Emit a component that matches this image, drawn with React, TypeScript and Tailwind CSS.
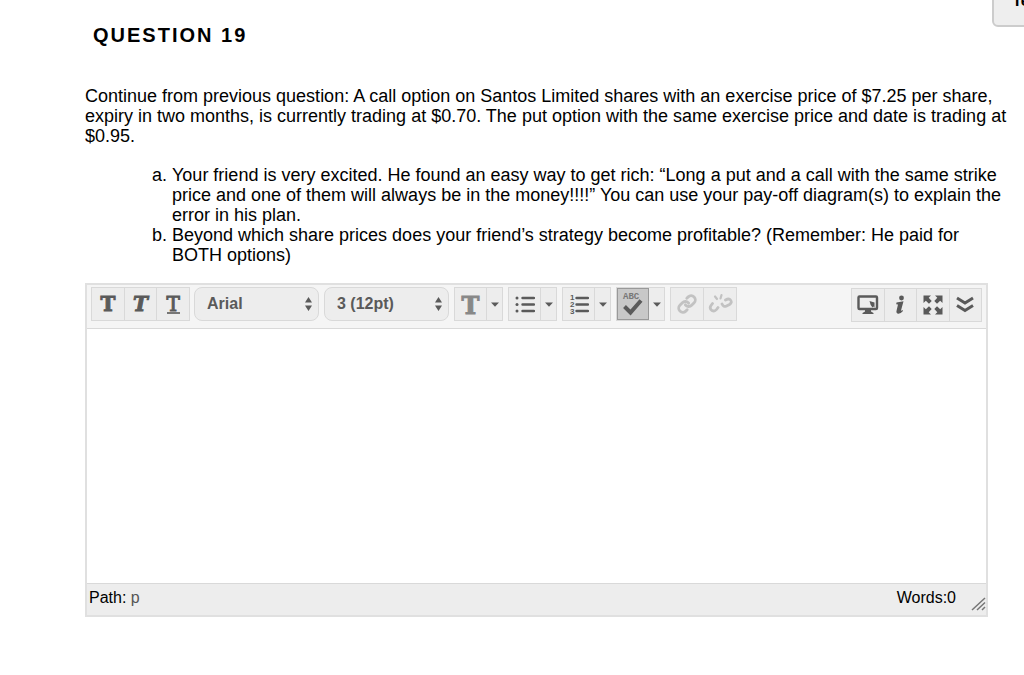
import { ReactNode } from "react";

const dark = "#5a5a5a";

function ToolButton({ label, children, className = "flex-1", disabled = false }: { label: string; children: ReactNode; className?: string; disabled?: boolean }) {
  return (
    <button type="button" aria-label={label} disabled={disabled} className={`flex items-center justify-center ${className}`}>
      {children}
    </button>
  );
}

function Group({ children, className = "" }: { children: ReactNode; className?: string }) {
  return (
    <div className={`flex h-[34px] shrink-0 divide-x divide-[#d9d9d9] border border-[#d9d9d9] bg-[#ededed] ${className}`}>{children}</div>
  );
}

function MenuArrow({ label }: { label: string }) {
  return (
    <ToolButton label={label} className="w-[15px]">
      <svg width="8" height="5" viewBox="0 0 8 5" fill={dark}>
        <path d="M0 0.500h8L4 4.8z" />
      </svg>
    </ToolButton>
  );
}

function SelectBox({ label, value }: { label: string; value: string }) {
  return (
    <div className="relative h-[34px] w-[125px] shrink-0">
      <select
        aria-label={label}
        className="h-full w-full appearance-none rounded-lg border border-[#d9d9d9] bg-[#ededed] pl-3 text-base font-bold text-[#5a5a5a]"
      >
        <option>{value}</option>
      </select>
      <svg className="pointer-events-none absolute right-[6px] top-[9px]" width="9" height="16" viewBox="0 0 9 16" fill={dark}>
        <path d="M1 6.5L4.5 1L8 6.5zM1 9.5L4.5 15L8 9.5z" />
      </svg>
    </div>
  );
}

function Bars() {
  return <path d="M7.5 4h11.500M7.500 10.500h11.500M7.500 17h11.500" stroke={dark} strokeWidth="2.4" strokeLinecap="round" />;
}

export default function App() {
  return (
    <div className="relative min-h-screen overflow-hidden bg-white font-['Liberation_Sans',Arial,sans-serif] text-lg leading-5 text-black">
      <button type="button" className="absolute -right-10 -top-3 h-[39px] rounded-md border-2 border-[#cccccc] bg-[#eeeeee] px-[18px] pb-[14px] text-base leading-5 font-bold">
        Test
      </button>

      <main className="ml-[85px] mr-[36px]">
        <h1 className="ml-2 pt-[25px] text-xl font-bold leading-5 tracking-widest">QUESTION 19</h1>

        <div className="-mr-5">
          <p className="mt-[41px]">
            Continue from previous question: A call option on Santos Limited shares with an exercise price of $7.25 per share, expiry in two months, is
            currently trading at $0.70. The put option with the same exercise price and date is trading at $0.95.
          </p>

          <ol className="mt-[19px] list-outside list-[lower-alpha] pl-[87px]">
            <li>
              Your friend is very excited. He found an easy way to get rich: “Long a put and a call with the same strike price and one of them will always
              be in the money!!!!” You can use your pay-off diagram(s) to explain the error in his plan.
            </li>
            <li>Beyond which share prices does your friend’s strategy become profitable? (Remember: He paid for BOTH options)</li>
          </ol>
        </div>

        <section className="mt-[18px] border-2 border-[#e0e0e0]">
          <div className="flex h-11 items-start border-b border-[#d9d9d9] bg-[#f5f5f5] px-1 pt-[2px]">
            <Group className="w-[99px] font-['DejaVu_Serif',serif] text-xl font-bold text-[#5a5a5a] [-webkit-text-stroke:1px]">
              <ToolButton label="Bold">T</ToolButton>
              <ToolButton label="Italic"><i>T</i></ToolButton>
              <ToolButton label="Underline"><span className="h-5 border-b-2 border-[#777777] leading-5 font-normal">T</span></ToolButton>
            </Group>
            <div className="ml-1 flex gap-[5px]">
              <SelectBox label="Font" value="Arial" />
              <SelectBox label="Font size" value="3 (12pt)" />
              <Group>
                <ToolButton label="Text color" className="w-8 pt-1 font-['DejaVu_Serif',serif] text-2xl font-bold text-[#888888] [-webkit-text-stroke:1px]">T</ToolButton>
                <MenuArrow label="Text color options" />
              </Group>
              <Group>
                <ToolButton label="Bulleted list" className="w-8">
                  <svg width="20" height="20" viewBox="0 0 20 20" fill={dark}>
                    <Bars />
                    <circle cx="2" cy="4" r="1.5" />
                    <circle cx="2" cy="10.5" r="1.5" />
                    <circle cx="2" cy="17" r="1.5" />
                  </svg>
                </ToolButton>
                <MenuArrow label="Bulleted list options" />
              </Group>
              <Group>
                <ToolButton label="Numbered list" className="w-8">
                  <svg width="20" height="24" viewBox="0 -2 20 24" fill={dark} fontSize="8" fontWeight="bold">
                    <Bars />
                    <text x="1" y="6">1</text>
                    <text x="1" y="13">2</text>
                    <text x="1" y="20">3</text>
                  </svg>
                </ToolButton>
                <MenuArrow label="Numbered list options" />
              </Group>
              <Group>
                <ToolButton label="Spell check" className="w-8 border border-[#999999] bg-[#c8c8c8]">
                  <svg width="24" height="28" viewBox="0 0 24 28" fill="none">
                    <text x="2" y="9" fontSize="9" fill="#777777" fontFamily="Liberation Mono" fontWeight="bold">ABC</text>
                    <path d="M3.500 16.500L9.500 22.500L20 10.500" stroke={dark} strokeWidth="4" />
                  </svg>
                </ToolButton>
                <MenuArrow label="Spell check options" />
              </Group>
              <Group className="w-[67px]">
                <ToolButton label="Insert link" disabled>
                  <svg width="20" height="20" viewBox="0 0 24 24" fill="none" stroke="#c2c2c2" strokeWidth="3.4" strokeLinecap="round">
                    <path d="M10 13a5 5 0 0 0 7.540.540l3-3a5 5 0 0 0-7.070-7.070l-1.720 1.710M14 11a5 5 0 0 0-7.540-.540l-3 3a5 5 0 0 0 7.070 7.070l1.710-1.710" />
                  </svg>
                </ToolButton>
                <ToolButton label="Remove link" disabled>
                  <svg width="25" height="22" viewBox="0 0 25 22" fill="none" stroke="#c2c2c2" strokeWidth="2.8" strokeLinecap="round">
                    <path d="M4.500 10.500L3 12.500Q1 15.500 4 17.500Q6.500 19 8.500 16.500L10 14.500M14 11Q15.500 14.500 18.500 13L21.500 11.500Q24.500 9.500 22.500 7Q21 5 17.500 7" />
                    <path d="M7 3.500L9 6M13.500 2L12.500 5.500" strokeWidth="2.2" />
                  </svg>
                </ToolButton>
              </Group>
            </div>
            <Group className="ml-auto mt-px w-[131px]">
              <ToolButton label="Preview">
                <svg width="22" height="20" viewBox="0 0 22 20" fill={dark}>
                  <rect x="1.500" y="1.500" width="18.500" height="12.500" rx="1" fill="none" stroke={dark} strokeWidth="2.4" />
                  <path d="M8 14.500h6v2l2.500 1.500v1h-11v-1l2.500-1.500zM12.500 6l5 1.500v5l-1-1-1 1-1.800-2.500z" />
                </svg>
              </ToolButton>
              <ToolButton label="Help">
                <svg width="10" height="20" viewBox="0 0 10 20" fill={dark}>
                  <circle cx="6.500" cy="3" r="2.400" />
                  <path d="M1.500 7.500L8.500 6.300L6 15.500Q6 16.200 7.500 15L8 16Q5.500 19 3 18.700Q0.800 18 1.600 15.500L3 9.500L1.200 9.200z" />
                </svg>
              </ToolButton>
              <ToolButton label="Full screen">
                <svg width="20" height="20" viewBox="0 0 20 20" fill={dark}>
                  <path d="M0.500 0.500h7.500l-2.300 2.300L8.700 6L6 8.700L2.800 5.700L0.500 8zM19.500 0.500v7.500l-2.300-2.300L14 8.700L11.300 6l3-3.200L12 0.500zM0.500 19.500v-7.500l2.300 2.300L6 11.300L8.700 14l-3 3.200L8 19.500zM19.500 19.500H12l2.300-2.300L11.300 14L14 11.300l3.200 3L19.500 12z" />
                </svg>
              </ToolButton>
              <ToolButton label="Show more">
                <svg width="18" height="18" viewBox="0 0 18 18" fill="none" stroke={dark} strokeWidth="3">
                  <path d="M1 2L9 7L17 2M1 9.500L9 14.500L17 9.500" />
                </svg>
              </ToolButton>
            </Group>
          </div>
          <textarea aria-label="Answer" className="block h-[254px] w-full resize-none bg-white p-2 outline-none" />
          <footer className="relative flex h-8 items-start justify-between border-t border-[#d9d9d9] bg-[#ededed] pl-[2px] pr-[30px] pt-1 text-base leading-5">
            <div>
              Path: <a href="#p" className="text-[#555555]">p</a>
            </div>
            <div>Words:0</div>
            <svg className="absolute bottom-1 right-0" width="15" height="14" viewBox="0 0 15 14" stroke="#777777" strokeWidth="1.5">
              <path d="M1 13L14 1M6 13L14 5.500M11 13L14 10" />
            </svg>
          </footer>
        </section>
      </main>
    </div>
  );
}
